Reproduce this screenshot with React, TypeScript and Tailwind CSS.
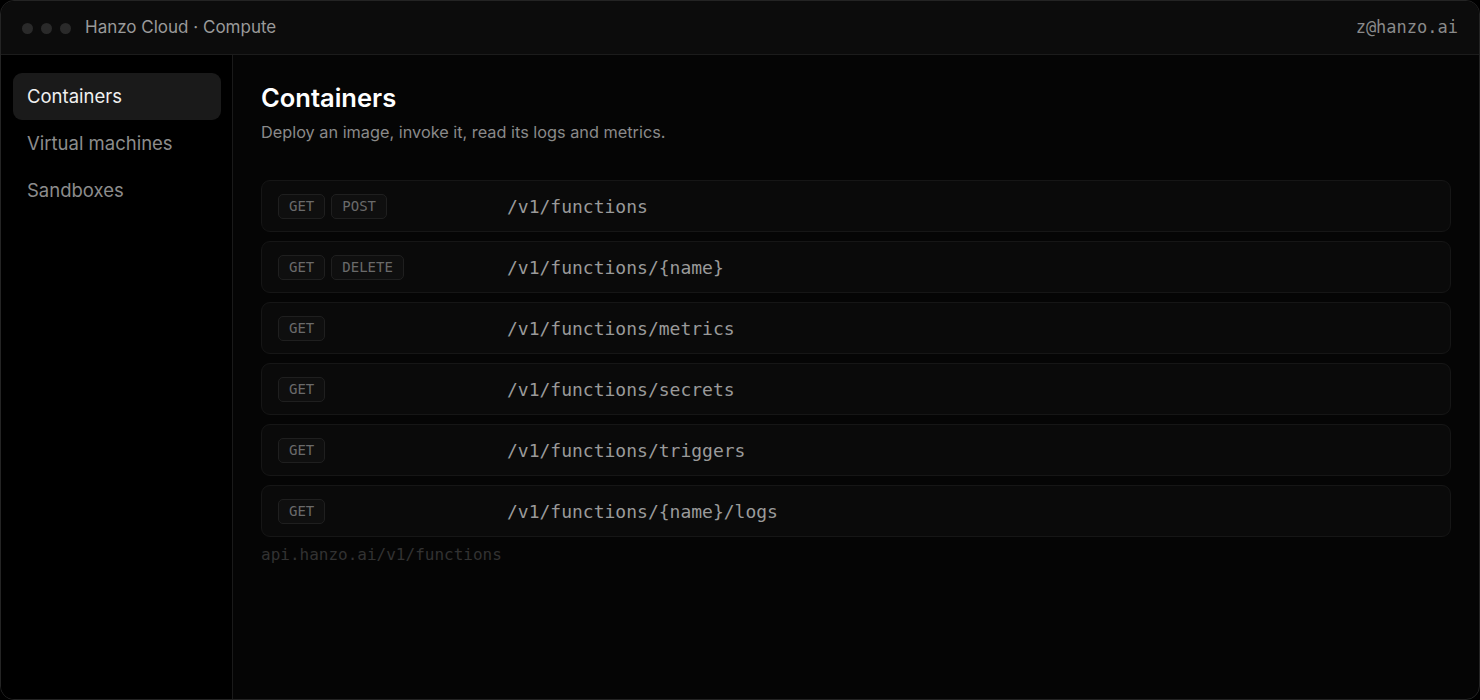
import React from "react";

type Endpoint = { methods: string[]; path: string };

const endpoints: Endpoint[] = [
  { methods: ["GET", "POST"], path: "/v1/functions" },
  { methods: ["GET", "DELETE"], path: "/v1/functions/{name}" },
  { methods: ["GET"], path: "/v1/functions/metrics" },
  { methods: ["GET"], path: "/v1/functions/secrets" },
  { methods: ["GET"], path: "/v1/functions/triggers" },
  { methods: ["GET"], path: "/v1/functions/{name}/logs" },
];

const navItems = ["Containers", "Virtual machines", "Sandboxes"];

const sans = "font-['Inter','Noto_Sans',sans-serif]";
const mono = "font-['DejaVu_Sans_Mono','Liberation_Mono',monospace]";

export default function App() {
  return (
    <div className={`h-[700px] w-[1480px] bg-black ${sans}`}>
      <div className="flex h-full flex-col overflow-hidden rounded-[14px] border border-[#242424] bg-[#050505]">
        {/* title bar */}
        <div className="flex h-[54px] shrink-0 items-center justify-between border-b border-[#1c1c1c] bg-[#0c0c0c] pl-[21px] pr-[21px] pt-[1px]">
          <div className="flex items-center">
            <div className="flex gap-[8px]">
              <span className="h-[11px] w-[11px] rounded-full bg-[#2a2a2a]" />
              <span className="h-[11px] w-[11px] rounded-full bg-[#2a2a2a]" />
              <span className="h-[11px] w-[11px] rounded-full bg-[#2a2a2a]" />
            </div>
            <span className="ml-[14px] text-[17px] text-[#9a9a9a]">Hanzo Cloud · Compute</span>
          </div>
          <span className={`${mono} text-[17px] text-[#8a8a8a]`}>z@hanzo.ai</span>
        </div>

        <div className="flex min-h-0 flex-1">
          {/* sidebar */}
          <aside className="flex w-[232px] shrink-0 flex-col border-r border-[#1a1a1a] bg-black pl-[12px] pr-[11px] pt-[18px]">
            {navItems.map((item, i) => (
              <div
                key={item}
                className={`flex h-[47px] items-center rounded-[9px] px-[14px] text-[18.5px] ${
                  i === 0 ? "bg-[#1a1a1a] text-[#f0f0f0]" : "text-[#8c8c8c]"
                }`}
              >
                {item}
              </div>
            ))}
          </aside>

          {/* main */}
          <main className="flex-1 px-[28px] pt-[28px]">
            <h1 className="text-[25.5px] font-semibold leading-[30px] text-white">Containers</h1>
            <p className="mt-[7px] text-[16.3px] text-[#8a8a8a]">Deploy an image, invoke it, read its logs and metrics.</p>

            <div className="mt-[36px] flex flex-col gap-[9px]">
              {endpoints.map((ep) => (
                <div
                  key={ep.path}
                  className="flex h-[52px] items-center rounded-[9px] border border-[#161616] bg-[#0a0a0a] pl-[16px] pt-[1px]"
                >
                  <div className="flex w-[229px] shrink-0 gap-[6px]">
                    {ep.methods.map((m) => (
                      <span
                        key={m}
                        className={`${mono} flex h-[25px] items-center rounded-[5px] border border-[#1f1f1f] bg-[#0f0f0f] px-[10px] text-[14px] text-[#6a6a6a]`}
                      >
                        {m}
                      </span>
                    ))}
                  </div>
                  <span className={`${mono} text-[18px] text-[#9a9a9a]`}>{ep.path}</span>
                </div>
              ))}
            </div>

            <div className={`${mono} mt-[6px] text-[16px] text-[#323232]`}>api.hanzo.ai/v1/functions</div>
          </main>
        </div>
      </div>
    </div>
  );
}
